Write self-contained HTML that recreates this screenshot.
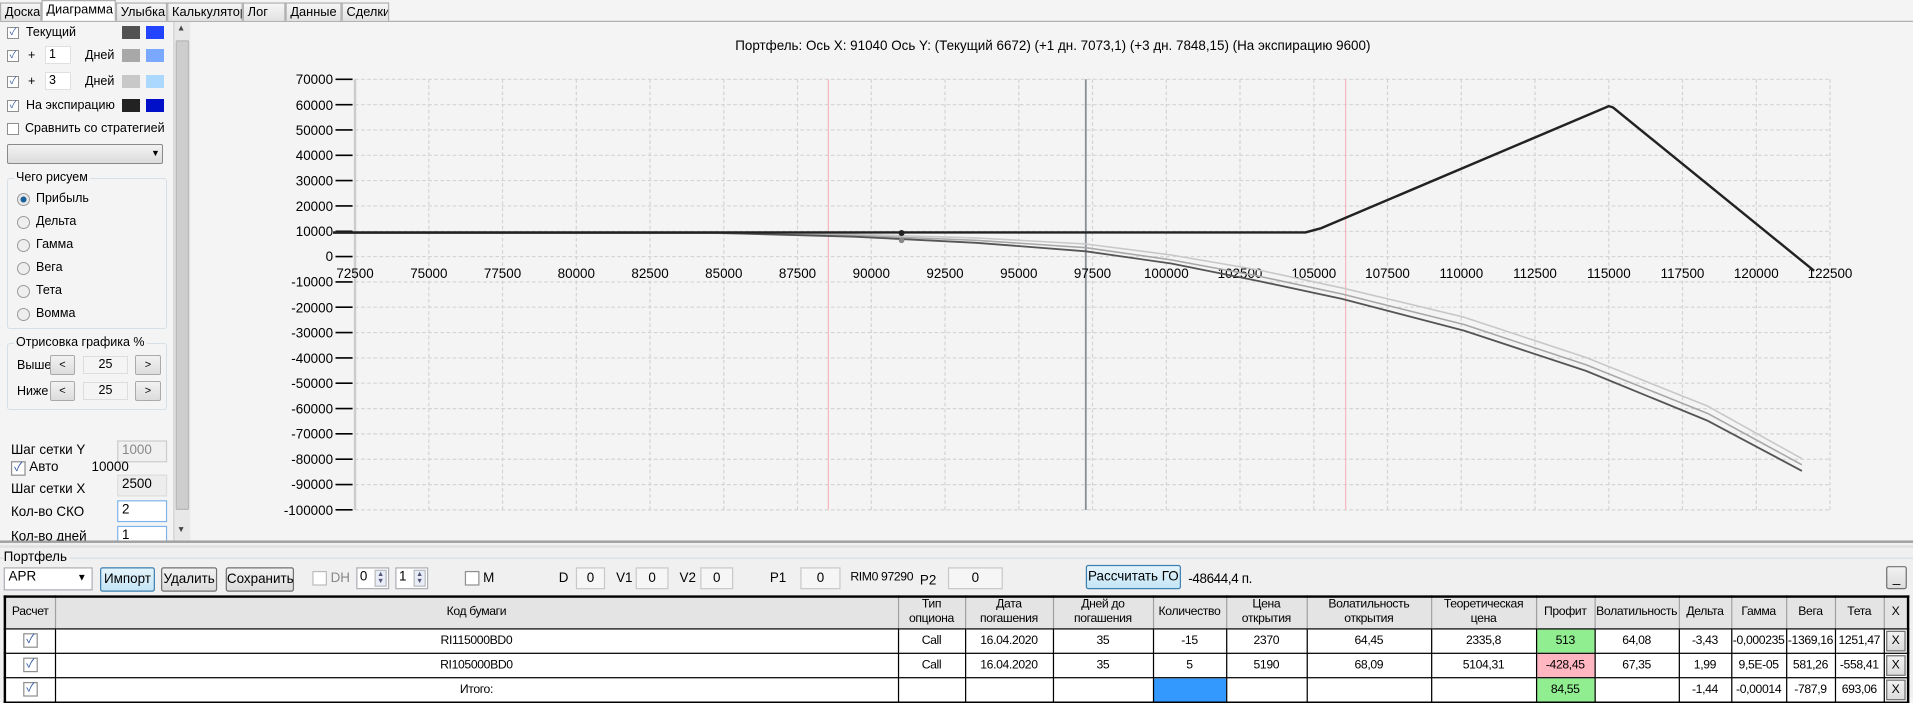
<!DOCTYPE html>
<html><head><meta charset="utf-8"><style>
*{box-sizing:border-box;margin:0;padding:0}
body{width:1913px;height:697px;overflow:hidden;background:#f4f4f4;font-family:"Liberation Sans","Noto Sans CJK SC",sans-serif;font-size:11px;color:#000;position:relative}
#s{position:absolute;left:0;top:0;width:1568px;height:572px;transform:scale(1.22);transform-origin:0 0}
#L{position:absolute;left:0;top:0;font-size:12.5px}
.a{position:absolute;white-space:nowrap}
.tab{position:absolute;top:2px;height:15px;border:1px solid #b0b0b0;border-bottom:none;background:linear-gradient(#f6f6f6,#e2e2e2);padding:0 3px;font-size:10.5px;line-height:14px;white-space:nowrap;overflow:hidden}
.cb{position:absolute;width:12px;height:12px;border:1px solid #8e8f8f;background:#fff;font-size:10px;line-height:10px;text-align:center;color:#3a5ea8}
.rd{position:absolute;width:13px;height:13px;border:1px solid #9a9a9a;border-radius:50%;background:#eee}
.in{position:absolute;height:18px;border:1px solid #abadb3;background:#fff;padding:1px 3px;font-size:11px;white-space:nowrap}
.sw{position:absolute;width:18px;height:13px}
.btn{position:absolute;height:20px;border:1px solid #707070;background:linear-gradient(#f2f2f2,#dcdcdc);text-align:center;line-height:18px;font-size:11px;border-radius:2px;white-space:nowrap}
.blue{border-color:#3c7fb1;background:linear-gradient(#e5f4fc,#c4e5f6)}
.grp{position:absolute;border:1px solid #d5dfe5;border-radius:3px}
table{position:absolute;border-collapse:collapse;font-size:10px;table-layout:fixed;letter-spacing:-0.3px}
td{border:1px solid #000;text-align:center;padding:0;height:20px;background:#fff;overflow:hidden;white-space:nowrap}
th{border:1px solid #a0a0a0;font-weight:normal;background:#e4e4e4;height:26px;line-height:12px;border-bottom:1px solid #000;overflow:hidden}
.x{border:1px solid #707070;background:linear-gradient(#f2f2f2,#dcdcdc);display:block;margin:1px;height:17px;line-height:15px}
.sm{position:absolute;height:18px;border:1px solid #c8c8c8;background:#f6f6f6;text-align:center;line-height:16px}
</style></head><body>
<div id="s">
<svg class="a" style="left:0;top:0" width="1568" height="444" viewBox="0 0 1568 444">
<text x="863" y="41" text-anchor="middle" font-family="Liberation Sans" font-size="11">Портфель: Ось X: 91040 Ось Y:  (Текущий 6672)  (+1 дн. 7073,1)  (+3 дн. 7848,15)  (На экспирацию 9600)</text>
<g stroke="#d4d4d4" stroke-dasharray="3,2" stroke-width="1">
<line x1="291" y1="65" x2="1500" y2="65"/><line x1="291" y1="85.8" x2="1500" y2="85.8"/><line x1="291" y1="106.5" x2="1500" y2="106.5"/><line x1="291" y1="127.3" x2="1500" y2="127.3"/><line x1="291" y1="148" x2="1500" y2="148"/><line x1="291" y1="168.8" x2="1500" y2="168.8"/><line x1="291" y1="189.6" x2="1500" y2="189.6"/><line x1="291" y1="210.3" x2="1500" y2="210.3"/><line x1="291" y1="231.1" x2="1500" y2="231.1"/><line x1="291" y1="251.8" x2="1500" y2="251.8"/><line x1="291" y1="272.6" x2="1500" y2="272.6"/><line x1="291" y1="293.4" x2="1500" y2="293.4"/><line x1="291" y1="314.1" x2="1500" y2="314.1"/><line x1="291" y1="334.9" x2="1500" y2="334.9"/><line x1="291" y1="355.6" x2="1500" y2="355.6"/><line x1="291" y1="376.4" x2="1500" y2="376.4"/><line x1="291" y1="397.2" x2="1500" y2="397.2"/><line x1="291" y1="417.9" x2="1500" y2="417.9"/>
<line x1="351.5" y1="65" x2="351.5" y2="418"/><line x1="411.9" y1="65" x2="411.9" y2="418"/><line x1="472.4" y1="65" x2="472.4" y2="418"/><line x1="532.8" y1="65" x2="532.8" y2="418"/><line x1="593.3" y1="65" x2="593.3" y2="418"/><line x1="653.7" y1="65" x2="653.7" y2="418"/><line x1="714.2" y1="65" x2="714.2" y2="418"/><line x1="774.6" y1="65" x2="774.6" y2="418"/><line x1="835.1" y1="65" x2="835.1" y2="418"/><line x1="895.5" y1="65" x2="895.5" y2="418"/><line x1="956" y1="65" x2="956" y2="418"/><line x1="1016.4" y1="65" x2="1016.4" y2="418"/><line x1="1076.9" y1="65" x2="1076.9" y2="418"/><line x1="1137.3" y1="65" x2="1137.3" y2="418"/><line x1="1197.8" y1="65" x2="1197.8" y2="418"/><line x1="1258.2" y1="65" x2="1258.2" y2="418"/><line x1="1318.7" y1="65" x2="1318.7" y2="418"/><line x1="1379.1" y1="65" x2="1379.1" y2="418"/><line x1="1439.6" y1="65" x2="1439.6" y2="418"/><line x1="1500" y1="65" x2="1500" y2="418"/>
</g>
<line x1="291" y1="65" x2="291" y2="418" stroke="#ccc" stroke-width="2"/>
<line x1="679" y1="65" x2="679" y2="418" stroke="#f4b8c0"/>
<line x1="1103" y1="65" x2="1103" y2="418" stroke="#f4b8c0"/>
<line x1="890" y1="65" x2="890" y2="418" stroke="#8a8f96" stroke-width="1.5"/>
<g stroke="#000" stroke-width="1.3">
<line x1="275" y1="65" x2="289" y2="65"/><line x1="275" y1="85.8" x2="289" y2="85.8"/><line x1="275" y1="106.5" x2="289" y2="106.5"/><line x1="275" y1="127.3" x2="289" y2="127.3"/><line x1="275" y1="148" x2="289" y2="148"/><line x1="275" y1="168.8" x2="289" y2="168.8"/><line x1="275" y1="189.6" x2="289" y2="189.6"/><line x1="275" y1="210.3" x2="289" y2="210.3"/><line x1="275" y1="231.1" x2="289" y2="231.1"/><line x1="275" y1="251.8" x2="289" y2="251.8"/><line x1="275" y1="272.6" x2="289" y2="272.6"/><line x1="275" y1="293.4" x2="289" y2="293.4"/><line x1="275" y1="314.1" x2="289" y2="314.1"/><line x1="275" y1="334.9" x2="289" y2="334.9"/><line x1="275" y1="355.6" x2="289" y2="355.6"/><line x1="275" y1="376.4" x2="289" y2="376.4"/><line x1="275" y1="397.2" x2="289" y2="397.2"/><line x1="275" y1="417.9" x2="289" y2="417.9"/>
</g>
<g font-family="Liberation Sans" font-size="11" text-anchor="end">
<text x="273" y="69">70000</text><text x="273" y="90">60000</text><text x="273" y="110.5">50000</text><text x="273" y="131">40000</text><text x="273" y="152">30000</text><text x="273" y="173">20000</text><text x="273" y="193.5">10000</text><text x="273" y="214">0</text><text x="273" y="235">-10000</text><text x="273" y="256">-20000</text><text x="273" y="276.5">-30000</text><text x="273" y="297.5">-40000</text><text x="273" y="318">-50000</text><text x="273" y="339">-60000</text><text x="273" y="359.5">-70000</text><text x="273" y="380.5">-80000</text><text x="273" y="401">-90000</text><text x="273" y="422">-100000</text>
</g>
<g font-family="Liberation Sans" font-size="11" text-anchor="middle">
<text x="291" y="228">72500</text><text x="351.5" y="228">75000</text><text x="411.9" y="228">77500</text><text x="472.4" y="228">80000</text><text x="532.8" y="228">82500</text><text x="593.3" y="228">85000</text><text x="653.7" y="228">87500</text><text x="714.2" y="228">90000</text><text x="774.6" y="228">92500</text><text x="835.1" y="228">95000</text><text x="895.5" y="228">97500</text><text x="956" y="228">100000</text><text x="1016.4" y="228">102500</text><text x="1076.9" y="228">105000</text><text x="1137.3" y="228">107500</text><text x="1197.8" y="228">110000</text><text x="1258.2" y="228">112500</text><text x="1318.7" y="228">115000</text><text x="1379.1" y="228">117500</text><text x="1439.6" y="228">120000</text><text x="1500" y="228">122500</text>
</g>
<g fill="none" stroke-linejoin="round">
<polyline stroke="#c8c8c8" stroke-width="1.3" points="273,191 570,191 700,192 800,195 890,200 960,209 1030,221 1100,236 1200,260 1300,293 1400,333 1477,376"/>
<polyline stroke="#a8a8a8" stroke-width="1.3" points="273,191 580,191 700,193 800,197 890,203 960,213 1030,226 1100,241 1200,266 1300,299 1400,339 1477,381"/>
<polyline stroke="#555" stroke-width="1.5" points="273,191 590,191 700,194 800,199 890,206 960,216 1030,230 1100,245 1200,271 1300,304 1400,345 1477,386"/>
<polyline stroke="#222" stroke-width="2" points="273,190.5 1070,190.5 1083,187 1318.7,87 1322,88 1487,222"/>
</g>
<circle cx="739" cy="191" r="2.5" fill="#222"/><circle cx="739" cy="197" r="2.3" fill="#888"/>
</svg>
<div style="position:absolute;left:0;top:17px;width:1568px;height:1px;background:#b0b0b0"></div>
<div class="tab" style="left:0;width:34px">Доска</div>
<div class="tab" style="left:34px;width:61px;top:0;height:17px;background:#fff">Диаграмма</div>
<div class="tab" style="left:95px;width:42px">Улыбка</div>
<div class="tab" style="left:137px;width:62px">Калькулятор</div>
<div class="tab" style="left:199px;width:35px">Лог</div>
<div class="tab" style="left:234px;width:46px">Данные</div>
<div class="tab" style="left:280px;width:39px">Сделки</div>
<div style="position:absolute;left:0;top:443px;width:1568px;height:129px;background:#f0f0f0;border-top:2px solid #a0a0a0"></div>
<div style="position:absolute;left:0;top:447px;width:1568px;height:2px;background:#e0e0e0"></div>
<div style="position:absolute;left:0;top:457px;width:1568px;height:1px;background:#d5dfe5"></div>
<div class="a" style="left:3px;top:451px;background:#f0f0f0;padding-right:2px">Портфель</div>
<div class="in" style="left:3px;top:465px;width:73px;height:19px">APR<span style="position:absolute;right:4px;top:3px;font-size:8px">▼</span></div>
<div class="btn blue" style="left:82px;top:465px;width:45px">Импорт</div>
<div class="btn" style="left:132px;top:465px;width:46px">Удалить</div>
<div class="btn" style="left:185px;top:465px;width:56px">Сохранить</div>
<div class="cb" style="left:256px;top:468px;border-color:#bbb"></div><div class="a" style="left:271px;top:468px;color:#888">DH</div>
<div class="in" style="left:292px;top:465px;width:27px;padding:1px 2px">0<span style="position:absolute;right:1px;top:1px;width:10px;height:14px;border:1px solid #bbb;background:#e8eef8;font-size:6px;line-height:6px;text-align:center;color:#557">▲<br>▼</span></div>
<div class="in" style="left:324px;top:465px;width:27px;padding:1px 2px">1<span style="position:absolute;right:1px;top:1px;width:10px;height:14px;border:1px solid #bbb;background:#e8eef8;font-size:6px;line-height:6px;text-align:center;color:#557">▲<br>▼</span></div>
<div class="cb" style="left:381px;top:468px"></div><div class="a" style="left:396px;top:468px">M</div>
<div class="a" style="left:458px;top:468px">D</div><div class="sm" style="left:472px;top:465px;width:24px">0</div>
<div class="a" style="left:505px;top:468px">V1</div><div class="sm" style="left:521px;top:465px;width:27px">0</div>
<div class="a" style="left:557px;top:468px">V2</div><div class="sm" style="left:574px;top:465px;width:27px">0</div>
<div class="a" style="left:631px;top:468px">P1</div><div class="sm" style="left:656px;top:465px;width:33px">0</div>
<div class="a" style="left:697px;top:468px;font-size:10px;letter-spacing:-0.3px">RIM0 97290</div>
<div class="a" style="left:754px;top:470px">P2</div><div class="sm" style="left:777px;top:465px;width:45px">0</div>
<div class="btn blue" style="left:890px;top:463px;width:78px">Рассчитать ГО</div>
<div class="a" style="left:974px;top:469px;letter-spacing:-0.3px">-48644,4 п.</div>
<div class="btn" style="left:1546px;top:464px;width:17px;height:19px">_</div>
<table style="left:3px;top:488px;width:1561px;border:2px solid #000">
<colgroup><col style="width:41px"><col style="width:691px"><col style="width:55px"><col style="width:72px"><col style="width:82px"><col style="width:60px"><col style="width:66px"><col style="width:102px"><col style="width:86px"><col style="width:48px"><col style="width:69px"><col style="width:43px"><col style="width:45px"><col style="width:40px"><col style="width:40px"><col style="width:20px"></colgroup>
<tr><th>Расчет</th><th>Код бумаги</th><th>Тип<br>опциона</th><th>Дата<br>погашения</th><th>Дней до<br>погашения</th><th>Количество</th><th>Цена<br>открытия</th><th>Волатильность<br>открытия</th><th>Теоретическая<br>цена</th><th>Профит</th><th>Волатильность</th><th>Дельта</th><th>Гамма</th><th>Вега</th><th>Тета</th><th>X</th></tr>
<tr><td><span class="cb" style="position:static;display:inline-block">✓</span></td><td>RI115000BD0</td><td>Call</td><td>16.04.2020</td><td>35</td><td>-15</td><td>2370</td><td>64,45</td><td>2335,8</td><td style="background:#90ee90">513</td><td>64,08</td><td>-3,43</td><td>-0,000235</td><td>-1369,16</td><td>1251,47</td><td><span class="x">X</span></td></tr>
<tr><td><span class="cb" style="position:static;display:inline-block">✓</span></td><td>RI105000BD0</td><td>Call</td><td>16.04.2020</td><td>35</td><td>5</td><td>5190</td><td>68,09</td><td>5104,31</td><td style="background:#ffb6c1">-428,45</td><td>67,35</td><td>1,99</td><td>9,5E-05</td><td>581,26</td><td>-558,41</td><td><span class="x">X</span></td></tr>
<tr><td><span class="cb" style="position:static;display:inline-block">✓</span></td><td>Итого:</td><td></td><td></td><td></td><td style="background:#3399ff"></td><td></td><td></td><td></td><td style="background:#90ee90">84,55</td><td></td><td>-1,44</td><td>-0,00014</td><td>-787,9</td><td>693,06</td><td><span class="x">X</span></td></tr>
</table>
<div style="position:absolute;left:0;top:355px;width:142px;height:88px;overflow:hidden">
<div class="a" style="left:9px;top:8px">Шаг сетки Y</div>
<div class="in" style="left:96px;top:6px;width:41px;background:#f0f0f0;color:#888;border-color:#ccc">1000</div>
<div class="cb" style="left:9px;top:23px">✓</div><div class="a" style="left:24px;top:22px">Авто</div><div class="a" style="left:75px;top:22px">10000</div>
<div class="a" style="left:9px;top:40px">Шаг сетки X</div>
<div class="in" style="left:96px;top:34px;width:41px;background:#ededed;border-color:#ddd">2500</div>
<div class="a" style="left:9px;top:59px">Кол-во СКО</div>
<div class="in" style="left:96px;top:55px;width:41px;border-color:#7eb4ea">2</div>
<div class="a" style="left:9px;top:79px">Кол-во дней</div>
<div class="in" style="left:96px;top:76px;width:41px;border-color:#7eb4ea">1</div>
</div>
<div style="position:absolute;left:142px;top:18px;width:14px;height:425px;background:#e8e8e8;border-left:1px solid #d0d0d0"></div>
<div style="position:absolute;left:144px;top:33px;width:11px;height:385px;background:#cdcdcd;border:1px solid #b8b8b8;border-radius:1px"></div>
<div class="a" style="left:145px;top:20px;font-size:7px;color:#444">▲</div>
<div class="a" style="left:145px;top:431px;font-size:7px;color:#444">▼</div>
</div>
<div id="L">
<div class="cb" style="left:7px;top:27px">✓</div><div class="a" style="left:26px;top:25px">Текущий</div>
<div class="sw" style="left:122px;top:26px;background:#525252"></div><div class="sw" style="left:146px;top:26px;background:#2244ff"></div>
<div class="cb" style="left:7px;top:50px">✓</div><div class="a" style="left:28px;top:48px">+</div>
<div class="in" style="left:45px;top:46px;width:26px;border-color:#e0e0e0;font-size:12.5px;padding:0 3px">1</div><div class="a" style="left:85px;top:48px">Дней</div>
<div class="sw" style="left:122px;top:49px;background:#a8a8a8"></div><div class="sw" style="left:146px;top:49px;background:#7aa8ff"></div>
<div class="cb" style="left:7px;top:76px">✓</div><div class="a" style="left:28px;top:74px">+</div>
<div class="in" style="left:45px;top:72px;width:26px;border-color:#e0e0e0;font-size:12.5px;padding:0 3px">3</div><div class="a" style="left:85px;top:74px">Дней</div>
<div class="sw" style="left:122px;top:75px;background:#c8c8c8"></div><div class="sw" style="left:146px;top:75px;background:#aad8ff"></div>
<div class="cb" style="left:7px;top:100px">✓</div><div class="a" style="left:26px;top:98px">На экспирацию</div>
<div class="sw" style="left:122px;top:99px;background:#222"></div><div class="sw" style="left:146px;top:99px;background:#0010c8"></div>
<div class="cb" style="left:7px;top:123px"></div><div class="a" style="left:25px;top:121px">Сравнить со стратегией</div>
<div style="position:absolute;left:7px;top:144px;width:156px;height:20px;border:1px solid #8a8a8a;border-radius:2px;background:linear-gradient(#f2f2f2,#dcdcdc)"></div>
<div class="a" style="left:151px;top:148px;font-size:9px">▼</div>
<div class="grp" style="left:7px;top:178px;width:160px;height:151px"></div>
<div class="a" style="left:14px;top:170px;background:#f4f4f4;padding:0 2px">Чего рисуем</div>
<div class="rd" style="left:17px;top:193px;background:radial-gradient(#1a5f9a 35%,#e8e8e8 42%)"></div><div class="a" style="left:36px;top:191px">Прибыль</div>
<div class="rd" style="left:17px;top:216px"></div><div class="a" style="left:36px;top:214px">Дельта</div>
<div class="rd" style="left:17px;top:239px"></div><div class="a" style="left:36px;top:237px">Гамма</div>
<div class="rd" style="left:17px;top:262px"></div><div class="a" style="left:36px;top:260px">Вега</div>
<div class="rd" style="left:17px;top:285px"></div><div class="a" style="left:36px;top:283px">Тета</div>
<div class="rd" style="left:17px;top:308px"></div><div class="a" style="left:36px;top:306px">Вомма</div>
<div class="grp" style="left:7px;top:343px;width:160px;height:67px"></div>
<div class="a" style="left:14px;top:335px;background:#f4f4f4;padding:0 2px">Отрисовка графика %</div>
<div class="a" style="left:17px;top:358px">Выше</div>
<div class="btn" style="left:50px;top:355px;width:25px;border-color:#aaa">&lt;</div>
<div class="in" style="left:83px;top:356px;width:45px;text-align:center;background:#f4f4f4;border-color:#ddd;font-size:12.5px;padding:0">25</div>
<div class="btn" style="left:135px;top:355px;width:26px;border-color:#aaa">&gt;</div>
<div class="a" style="left:17px;top:384px">Ниже</div>
<div class="btn" style="left:50px;top:381px;width:25px;border-color:#aaa">&lt;</div>
<div class="in" style="left:83px;top:382px;width:45px;text-align:center;background:#f4f4f4;border-color:#ddd;font-size:12.5px;padding:0">25</div>
<div class="btn" style="left:135px;top:381px;width:26px;border-color:#aaa">&gt;</div>
</div>
</body></html>
